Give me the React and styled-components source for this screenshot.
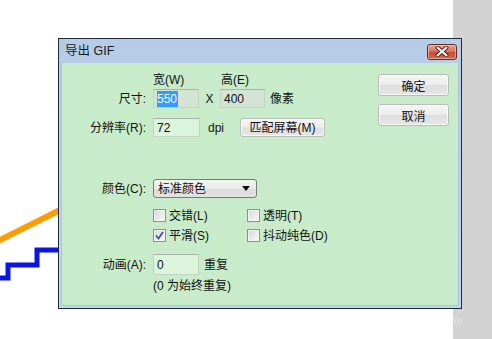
import React from 'react';
import styled, { createGlobalStyle } from 'styled-components';

const Global = createGlobalStyle`
  html, body { margin: 0; padding: 0; background: #fff; }
  body {
    width: 492px; height: 339px; overflow: hidden;
    font-family: "Liberation Sans", "Noto Sans CJK SC", sans-serif;
    font-size: 12px; color: #111;
  }
`;

const Desktop = styled.div`
  position: relative;
  width: 492px;
  height: 339px;
  background: #fff;
  overflow: hidden;
`;

const SideStrip = styled.div`
  position: absolute;
  top: 0;
  right: 0;
  width: 39px;
  height: 100%;
  background: #d3d3d3;
`;

const Drawing = styled.svg`
  position: absolute;
  left: 0;
  top: 0;
`;

const Dialog = styled.div`
  position: absolute;
  left: 58px;
  top: 38px;
  width: 404px;
  height: 271px;
  box-sizing: border-box;
  border: 1px solid #1d2c3c;
  background: linear-gradient(#b6cce6, #c4d6ec);
  display: flex;
  flex-direction: column;
`;

const TitleBar = styled.div`
  height: 24px;
  flex: none;
  display: flex;
  align-items: center;
  justify-content: space-between;
  padding: 0 4px 0 6px;
`;

const Title = styled.div`
  font-size: 12.5px;
  line-height: 14px;
  color: #1a1a1a;
`;

const CloseButton = styled.div`
  width: 30px;
  height: 16px;
  margin-top: 1px;
  box-sizing: border-box;
  border: 1px solid #6b2a20;
  border-radius: 3px;
  background: linear-gradient(#e8a596 0%, #d7765f 45%, #c34a30 55%, #d2704f 100%);
  display: flex;
  align-items: center;
  justify-content: center;
  box-shadow: inset 0 0 0 1px rgba(255, 220, 210, 0.5);
`;

const Body = styled.div`
  flex: 1;
  margin: 0 2px 2px;
  background: #c8ecca;
  box-shadow: inset 1px 0 0 #a9c4e2, inset -1px 0 0 #a9c4e2, inset 0 -1px 0 #a9c4e2;
  display: flex;
`;

const Form = styled.div`
  flex: 1;
  padding-top: 10px;
  display: flex;
  flex-direction: column;
`;

const Row = styled.div`
  display: flex;
  align-items: center;
  height: ${p => p.h}px;
  margin-top: ${p => p.mt || 0}px;
  line-height: 14px;
  white-space: nowrap;
`;

const Label = styled.div`
  width: 92px;
  flex: none;
  box-sizing: border-box;
  padding-right: 7px;
  text-align: right;
`;

const HeaderCell = styled.div`
  width: ${p => p.w}px;
  flex: none;
`;

const TextBox = styled.div`
  width: ${p => p.w}px;
  height: ${p => p.h || 19}px;
  flex: none;
  box-sizing: border-box;
  border: 1px solid #c4d2c4;
  border-top-color: #aab3aa;
  background: ${p => (p.light ? '#dbf5dc' : '#d3e3d4')};
  display: flex;
  align-items: center;
  padding-left: 3px;
`;

const Selection = styled.span`
  background: #3399ff;
  color: #fff;
  padding: 1px 1px 1px 0;
`;

const Sep = styled.div`
  width: ${p => p.w}px;
  flex: none;
  text-align: ${p => p.align || 'center'};
  padding-left: ${p => p.pl || 0}px;
  box-sizing: border-box;
`;

const Unit = styled.div`
  margin-left: ${p => p.ml}px;
`;

const Button = styled.div`
  width: ${p => p.w}px;
  height: ${p => p.h}px;
  flex: none;
  box-sizing: border-box;
  border: 1px solid #b9bdb9;
  border-radius: 3px;
  background: linear-gradient(#f6f6f6 0%, #ececec 48%, #dedede 52%, #e6e6e6 100%);
  display: flex;
  align-items: center;
  justify-content: center;
  color: #111;
  box-shadow: inset 0 0 0 1px rgba(255, 255, 255, 0.7);
`;

const Select = styled.div`
  width: 104px;
  height: 19px;
  flex: none;
  box-sizing: border-box;
  border: 1px solid #7a7a7a;
  border-radius: 3px;
  background: linear-gradient(#f4f4f4 0%, #ebebeb 50%, #dcdcdc 51%, #e2e2e2 100%);
  display: flex;
  align-items: center;
  justify-content: space-between;
  padding: 0 6px 0 4px;
`;

const CheckItem = styled.div`
  width: ${p => p.w}px;
  flex: none;
  display: flex;
  align-items: center;
  gap: 3px;
`;

const Box = styled.div`
  width: 13px;
  height: 13px;
  box-sizing: border-box;
  border: 1px solid #8e8f8f;
  background: linear-gradient(135deg, #d4d6da 0%, #eef0f2 70%, #fafafa 100%);
  box-shadow: inset 0 0 0 1px #f4f4f4;
  display: flex;
  align-items: center;
  justify-content: center;
`;

const ButtonColumn = styled.div`
  flex: none;
  padding: 11px 10px 0 0;
  display: flex;
  flex-direction: column;
  gap: 8px;
`;

const Check = ({ checked, label, w }) => (
  <CheckItem w={w}>
    <Box>
      {checked && (
        <svg width="9" height="9" viewBox="0 0 9 9">
          <path d="M1 4.5 L3.5 7.5 L8 1" fill="none" stroke="#3b559c" strokeWidth="1.8" />
        </svg>
      )}
    </Box>
    <span>{label}</span>
  </CheckItem>
);

export default function App() {
  return (
    <>
      <Global />
      <Desktop>
        <SideStrip />
        <Drawing width="492" height="339" viewBox="0 0 492 339">
          <line x1="-2" y1="241" x2="60" y2="210" stroke="#ff9c00" strokeWidth="6" />
          <path d="M60 250 H37 V265 H8 V278 H-2" fill="none" stroke="#0a14e6" strokeWidth="5" />
          <g stroke="#e6e6e6" strokeWidth="1" fill="none">
            <path d="M455 300 h6 M456 303 h5 M456 306 h5" />
            <path d="M455 318 v6 M458 318 v6 M461 318 v6" />
          </g>
        </Drawing>
        <Dialog>
          <TitleBar>
            <Title>导出 GIF</Title>
            <CloseButton>
              <svg width="14" height="11" viewBox="0 0 14 11">
                <path d="M2.5 1.5 L11.5 9.5 M11.5 1.5 L2.5 9.5" stroke="#5a2018" strokeWidth="4" strokeLinecap="round" />
                <path d="M2.5 1.5 L11.5 9.5 M11.5 1.5 L2.5 9.5" stroke="#fff" strokeWidth="2" strokeLinecap="round" />
              </svg>
            </CloseButton>
          </TitleBar>
          <Body>
            <Form>
              <Row h={14}>
                <Label />
                <HeaderCell w={68}>宽(W)</HeaderCell>
                <HeaderCell w={50}>高(E)</HeaderCell>
              </Row>
              <Row h={19} mt={2}>
                <Label>尺寸:</Label>
                <TextBox w={46}><Selection>550</Selection></TextBox>
                <Sep w={21}>X</Sep>
                <TextBox w={45}>400</TextBox>
                <Unit ml={5}>像素</Unit>
              </Row>
              <Row h={19} mt={10}>
                <Label>分辨率(R):</Label>
                <TextBox w={47} light>72</TextBox>
                <Sep w={40} align="left" pl={8}>dpi</Sep>
                <Button w={85} h={19}>匹配屏幕(M)</Button>
              </Row>
              <Row h={19} mt={42}>
                <Label>颜色(C):</Label>
                <Select>
                  <span>标准颜色</span>
                  <svg width="8" height="5" viewBox="0 0 8 5">
                    <path d="M0 0 H8 L4 5 Z" fill="#111" />
                  </svg>
                </Select>
              </Row>
              <Row h={13} mt={11}>
                <Label />
                <Check w={94} label="交错(L)" />
                <Check w={90} label="透明(T)" />
              </Row>
              <Row h={13} mt={7}>
                <Label />
                <Check w={94} checked label="平滑(S)" />
                <Check w={100} label="抖动纯色(D)" />
              </Row>
              <Row h={21} mt={12}>
                <Label>动画(A):</Label>
                <TextBox w={46} h={21} light>0</TextBox>
                <Unit ml={5}>重复</Unit>
              </Row>
              <Row h={14} mt={4}>
                <Label />
                <span>(0 为始终重复)</span>
              </Row>
            </Form>
            <ButtonColumn>
              <Button w={71} h={22}>确定</Button>
              <Button w={71} h={22}>取消</Button>
            </ButtonColumn>
          </Body>
        </Dialog>
      </Desktop>
    </>
  );
}
